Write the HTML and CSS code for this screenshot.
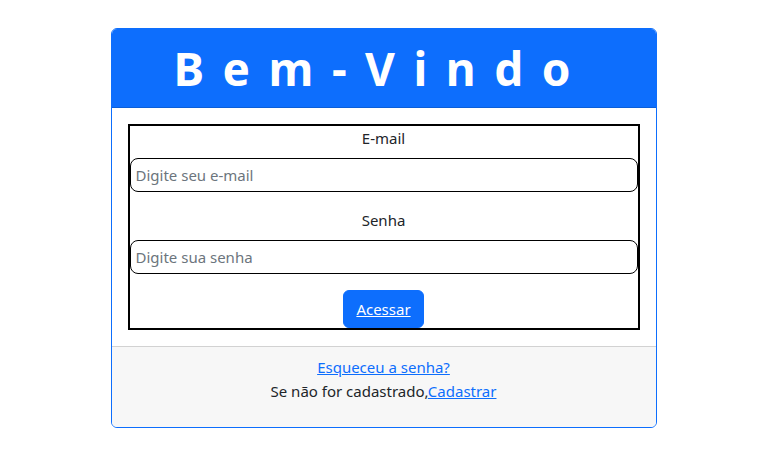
FILE: index.html
```html
<!DOCTYPE html>
<html lang="pt-BR">
<head>
<meta charset="utf-8">
<title>Bem-Vindo</title>
<link rel="stylesheet" href="styles.css">
</head>
<body>
<div class="card">
  <div class="card-header">
    <h1 class="title">Bem-Vindo</h1>
  </div>
  <div class="card-body">
    <form class="login-box">
      <label class="field-label" for="email">E-mail</label>
      <input class="field-input" id="email" type="email" placeholder="Digite seu e-mail">
      <label class="field-label gap" for="senha">Senha</label>
      <input class="field-input" id="senha" type="password" placeholder="Digite sua senha">
      <div class="actions">
        <button type="button" class="btn-primary"><span class="btn-text">Acessar</span></button>
      </div>
    </form>
  </div>
  <div class="card-footer">
    <a href="#" class="link">Esqueceu a senha?</a>
    <p class="signup">Se não for cadastrado,<a href="#" class="link">Cadastrar</a></p>
  </div>
</div>
</body>
</html>
```

FILE: styles.css
```css
* { box-sizing: border-box; }
html, body {
  margin: 0;
  padding: 0;
  background: #fff;
}
body {
  font-family: "Noto Sans", "Open Sans", sans-serif;
  font-size: 15px;
  line-height: 24px;
  color: #212529;
  padding-top: 28px;
  padding-right: 4px;
}
.card {
  width: 546px;
  margin: 0 auto;
  border: 1px solid #0d6efd;
  border-radius: 6px;
  overflow: hidden;
  background: #fff;
}
.card-header {
  background: #0d6efd;
  height: 79px;
  border-bottom: 1px solid #0b5ed7;
  display: flex;
  align-items: center;
  justify-content: flex-start;
  padding-left: 62px;
}
.title {
  margin: 0;
  color: #fff;
  font-size: 46px;
  font-weight: 700;
  line-height: 56px;
  letter-spacing: 18.5px;
}
.card-body {
  padding: 16px;
}
.login-box {
  border: 2px solid #000;
  display: flex;
  flex-direction: column;
  margin: 0;
}
.field-label {
  text-align: center;
  line-height: 24px;
  margin-bottom: 8px;
}
.field-label.gap {
  margin-top: 16px;
}
.field-input {
  width: 100%;
  height: 34px;
  border: 1px solid #000;
  border-radius: 8px;
  padding: 0 5px;
  font-family: inherit;
  font-size: 15px;
  color: #212529;
  background: #fff;
  outline: none;
}
.field-input::placeholder {
  color: #6c757d;
}
.actions {
  display: flex;
  justify-content: center;
  margin-top: 16px;
}
.btn-primary {
  background: #0d6efd;
  border: 1px solid #0d6efd;
  border-radius: 6px;
  color: #fff;
  font-family: inherit;
  font-size: 15px;
  line-height: 24px;
  padding: 6px 12px;
  height: 38px;
  cursor: pointer;
}
.btn-text {
  text-decoration: underline;
}
.card-footer {
  background: #f7f7f7;
  border-top: 1px solid #d2d2d2;
  padding: 8px 16px;
  text-align: center;
}
.link {
  color: #0d6efd;
  text-decoration: underline;
}
.signup {
  margin: 0 0 16px;
}
```
